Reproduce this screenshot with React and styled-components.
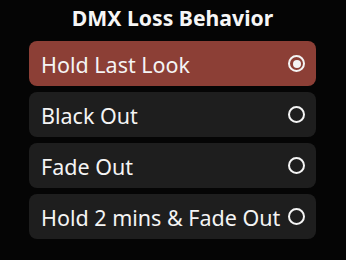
import React, { useState } from 'react';
import styled, { createGlobalStyle } from 'styled-components';

const GlobalStyle = createGlobalStyle`
    html, body {
        margin: 0;
        padding: 0;
        background-color: #050505;
    }
    body {
        font-family: "Noto Sans", "Liberation Sans", Arial, sans-serif;
        -webkit-font-smoothing: antialiased;
    }
`

const Screen = styled.div`
    width: 346px;
    height: 260px;
    box-sizing: border-box;
    padding: 6px 30px 0 29px;
    display: flex;
    flex-direction: column;
    background-color: #050505;
    color: #f4f4f4;
`

const Title = styled.h1`
    margin: 0 0 11px;
    font-size: 21.2px;
    line-height: 24px;
    font-weight: 700;
    text-align: center;
    color: #f6f6f6;
`

const Options = styled.div`
    display: flex;
    flex-direction: column;
    gap: 6px;
`

const Option = styled.button`
    height: 45px;
    box-sizing: border-box;
    display: flex;
    align-items: center;
    justify-content: space-between;
    padding: 0 11px 0 12px;
    border: 0;
    border-radius: 8px;
    background-color: ${props => props.$active ? '#8c3f36' : '#1e1e1e'};
    color: #f4f4f4;
    font-family: inherit;
    font-size: 21.5px;
    text-align: left;
    cursor: pointer;
`

const Label = styled.span`
    white-space: nowrap;
    margin-top: 1px;
`

const Radio = styled.span`
    flex: none;
    width: 17px;
    height: 17px;
    box-sizing: border-box;
    border: 2px solid #f4f4f4;
    border-radius: 50%;
    display: flex;
    align-items: center;
    justify-content: center;
    &::after{
        content: '';
        width: 8px;
        height: 8px;
        border-radius: 50%;
        background-color: #f4f4f4;
        display: ${props => props.$checked ? 'block' : 'none'};
    }
`

const choices = ['Hold Last Look', 'Black Out', 'Fade Out', 'Hold 2 mins & Fade Out'];

const App = () => {
    const [selected, setSelected] = useState(0);
    return(
        <>
            <GlobalStyle />
            <Screen>
                <Title>DMX Loss Behavior</Title>
                <Options>
                    {
                        choices.map((c, i) => (
                            <Option key={c} $active={i === selected} onClick={() => setSelected(i)}>
                                <Label>{c}</Label>
                                <Radio $checked={i === selected} />
                            </Option>
                        ))
                    }
                </Options>
            </Screen>
        </>
    )
}

export default App;
